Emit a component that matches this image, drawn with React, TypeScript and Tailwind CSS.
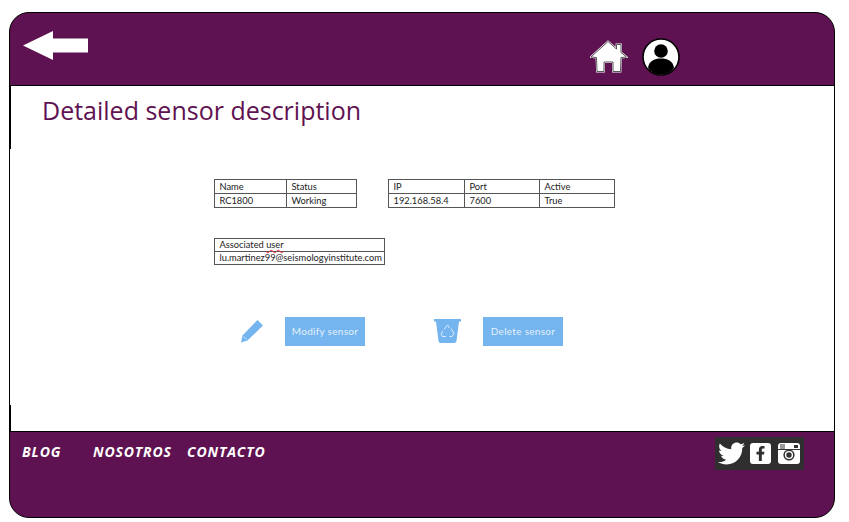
import type { ReactNode } from "react";
import { FaTwitter, FaFacebookF } from "react-icons/fa";

function DataTable({ cols, rows, rowH, className }: { cols: string[]; rows: ReactNode[][]; rowH: string; className: string }) {
  return (
    <table className={`border-collapse table-fixed text-[9.3px] text-[#222] ${className}`}>
      <tbody>
        {rows.map((r, i) => (
          <tr key={i} className={rowH}>
            {r.map((c, j) => (
              <td key={j} className="border border-[#555] px-[4.5px] pt-0 pb-[1px] leading-[11px] font-normal text-left whitespace-nowrap" style={{ width: cols[j] }}>{c}</td>
            ))}
          </tr>
        ))}
      </tbody>
    </table>
  );
}

const houseD = "M1 17 L18 1.5 L26.5 9 L26.5 4.5 L31 4.5 L31 12.5 L36.5 17 L31 17.5 L30.5 31.5 L23 31.5 L23 22 L14 22 L14 31.5 L7 31.5 L6.5 17.5 Z";

function House() {
  return (
    <svg width="38" height="33" viewBox="0 0 38 33">
      <path d={houseD} fill="#fff" stroke="#fff" strokeWidth="1.8" />
      <path d={houseD} fill="#fff" stroke="#444" strokeWidth="0.9" />
    </svg>
  );
}

function User() {
  return (
    <svg width="38" height="38" viewBox="0 0 38 38">
      <circle cx="19" cy="19" r="18" fill="#fff" stroke="#000" strokeWidth="1.6" />
      <circle cx="19" cy="13" r="6.8" fill="#000" />
      <path d="M6 30 C7 23 12 20.5 19 20.5 C26 20.5 31 23 32 30 C29 34.5 24 36.5 19 36.5 C14 36.5 9 34.5 6 30 Z" fill="#000" />
    </svg>
  );
}

function Pencil() {
  return (
    <svg width="24" height="24" viewBox="0 0 24 24">
      <path d="M17.5 1 L23 6.5 L7.5 21.5 L1 23.5 L2.5 16.5 Z" fill="#74b5ef" />
      <path d="M3.5 17.5 L6.5 20.5" stroke="#dcecfb" strokeWidth="0.8" />
    </svg>
  );
}

function Bin() {
  return (
    <svg width="27" height="26" viewBox="0 0 27 26">
      <path d="M0 1 H27 V3.5 H25 L22.5 23 Q22.2 25 20.5 25 H6.5 Q4.8 25 4.5 23 L2 3.5 H0 Z" fill="#74b5ef" />
      <g fill="none" stroke="#dcecfb" strokeWidth="1" strokeLinejoin="round">
        <path d="M10 11.5 L13.5 7 L15.5 10" />
        <path d="M17 10.5 L20 15.5 L18 18.5 H15.5" />
        <path d="M12 18.5 H8.5 L7 16 L9 13" />
      </g>
    </svg>
  );
}

function Instagram() {
  return (
    <svg width="22" height="21" viewBox="0 0 22 21">
      <rect x="0" y="0" width="22" height="21" rx="3" fill="#fff" />
      <rect x="2" y="1" width="5" height="5" fill="#999" />
      <rect x="0" y="6" width="22" height="1" fill="#333" />
      <rect x="16" y="2" width="4" height="3" fill="#333" />
      <circle cx="11" cy="12" r="5.6" fill="#333" />
      <circle cx="11" cy="12" r="4.1" fill="#fff" />
      <circle cx="11" cy="12" r="2.7" fill="#333" />
    </svg>
  );
}

export default function App() {
  return (
    <div className="w-[849px] h-[522px] bg-white pt-3 pl-[9px] overflow-hidden" style={{ fontFamily: "Lato, sans-serif" }}>
      <div className="w-[826px] h-[506px] rounded-[20px] border border-black bg-[#5f1251] overflow-hidden flex flex-col">
        <header className="h-[73px] shrink-0 border-b border-black flex items-start pl-[13px] pt-[18px]">
          <svg width="65" height="29" viewBox="0 0 65 29" className="shrink-0">
            <path d="M0 14.5 L30 0 V7.5 H65 V21.5 H30 V29 Z" fill="#fff" />
          </svg>
          <div className="ml-[502px] mt-[9px]"><House /></div>
          <div className="ml-[14px] mt-[7px]"><User /></div>
        </header>

        <main className="flex-1 bg-white flex flex-col">
          <div className="h-[63px] shrink-0 border-l border-black pl-[31px] pt-[7px]">
            <h1 className="text-[25px] leading-[34px] text-[#5f1251]" style={{ fontFamily: '"Open Sans", sans-serif' }}>
              Detailed sensor description
            </h1>
          </div>
          <div className="flex-1 pl-[204px] pt-[30px]">
            <div className="flex gap-[31px]">
              <DataTable className="w-[142px]" rowH="h-[14px]" cols={["72px", "70px"]} rows={[["Name", "Status"], ["RC1800", "Working"]]} />
              <DataTable className="w-[226px]" rowH="h-[14px]" cols={["76px", "75px", "75px"]} rows={[["IP", "Port", "Active"], ["192.168.58.4", "7600", "True"]]} />
            </div>
            <div className="mt-[30px]">
              <DataTable
                className="w-[170px]"
                rowH="h-[12px]"
                cols={["170px"]}
                rows={[
                  [<>Associated <span className="underline decoration-wavy decoration-red-500 decoration-[0.5px]">user</span></>],
                  ["lu.martinez99@seismologyinstitute.com"],
                ]}
              />
            </div>
            <div className="mt-[52px] flex items-center">
              <div className="ml-[26px] mb-[2px]"><Pencil /></div>
              <button className="ml-[21px] w-[80px] h-[29px] bg-[#74b5ef] text-[10px] text-[#e4f0fb] tracking-[0.3px]">Modify sensor</button>
              <div className="ml-[69px] mb-[2px]"><Bin /></div>
              <button className="ml-[22px] w-[80px] h-[29px] bg-[#74b5ef] text-[10px] text-[#e4f0fb] tracking-[0.3px]">Delete sensor</button>
            </div>
          </div>
          <div className="h-[26px] shrink-0 border-l border-black" />
        </main>

        <footer className="h-[86px] shrink-0 border-t border-black flex items-start">
          <nav className="flex pl-[12px] pt-[11px] text-[14px] leading-[18px] font-bold italic text-white tracking-[0.85px]" style={{ fontFamily: '"Open Sans", sans-serif' }}>
            <a className="w-[71px]">BLOG</a>
            <a className="w-[94px]">NOSOTROS</a>
            <a>CONTACTO</a>
          </nav>
          <div className="ml-auto mr-[30px] mt-[5px] w-[89px] h-[33px] bg-[#2f2f2f] flex items-center pl-[3px]">
            <FaTwitter className="text-[27px] text-white shrink-0" />
            <span className="ml-[5px] w-[21px] h-[21px] rounded-[3px] bg-white flex items-center justify-center shrink-0">
              <FaFacebookF className="text-[15px] text-[#2f2f2f]" />
            </span>
            <span className="ml-[7px]"><Instagram /></span>
          </div>
        </footer>
      </div>
    </div>
  );
}
